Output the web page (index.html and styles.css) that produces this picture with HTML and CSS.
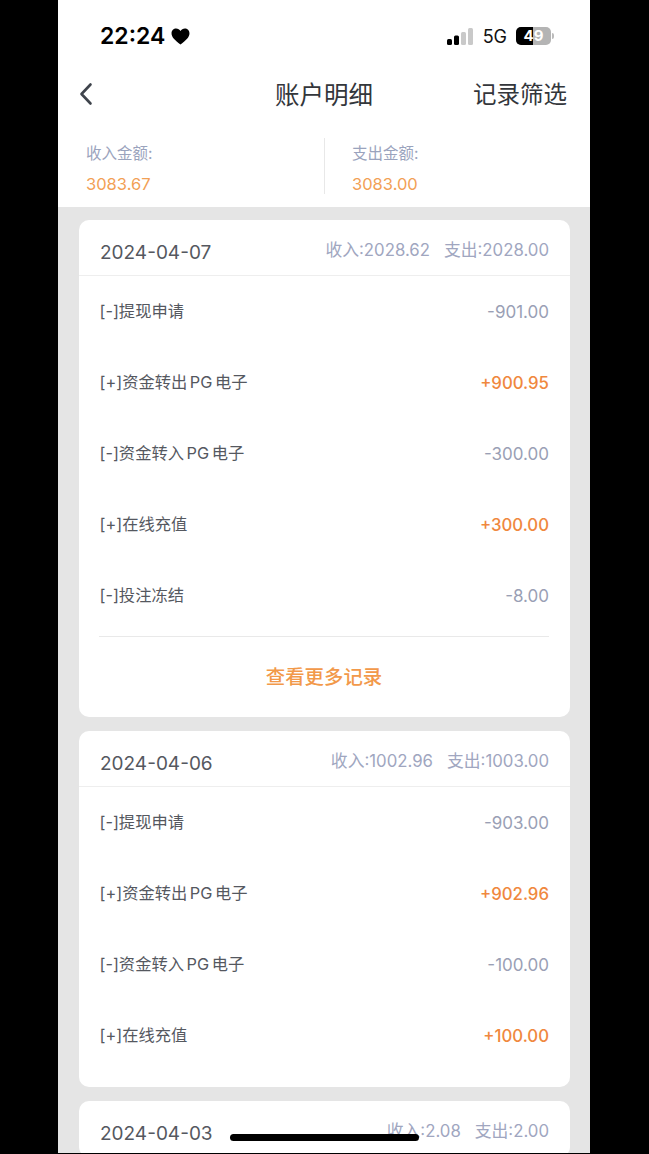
FILE: index.html
```html
<!DOCTYPE html>
<html lang="zh-CN">
<head>
<meta charset="utf-8">
<title>账户明细</title>
<link rel="stylesheet" href="styles.css">
</head>
<body>
<div class="screen">
  <header class="top">
    <div class="status">
      <div class="status-left"><span class="time">22:24</span>
        <svg class="heart" viewBox="0 0 20 18" width="19" height="17"><path d="M10 17.5C4 13 .5 9.8.5 5.6.5 2.6 2.8.5 5.4.5 7.3.5 9 1.5 10 3.3 11 1.5 12.7.5 14.6.5c2.6 0 4.9 2.100 4.900 5.100 0 4.200-3.500 7.400-9.500 11.900z" fill="#000"/></svg>
      </div>
      <div class="status-right">
        <svg class="signal" viewBox="0 0 28 17" width="28" height="17"><rect x="0" y="11" width="5" height="6" rx="1.500" fill="#000"/><rect x="7" y="7.500" width="5" height="9.500" rx="1.500" fill="#000"/><rect x="14" y="4" width="5" height="13" rx="1.500" fill="#c9c9c9"/><rect x="21" y="0" width="5" height="17" rx="1.500" fill="#c9c9c9"/></svg>
        <span class="net">5G</span>
        <div class="battery"><span class="batt-fill"></span><span class="batt-num">49</span></div>
        <span class="batt-cap"></span>
      </div>
    </div>
    <nav class="nav">
      <svg class="back" viewBox="0 0 14 24" width="14" height="24"><path d="M11.500 2.500 2.500 12l9 9.500" fill="none" stroke="#3f444c" stroke-width="2.600" stroke-linecap="round" stroke-linejoin="round"/></svg>
      <h1 class="title">账户明细</h1>
      <span class="filter">记录筛选</span>
    </nav>
    <div class="totals">
      <div class="total"><span class="total-label">收入金额:</span><span class="total-value">3083.67</span></div>
      <div class="total total-right"><span class="total-label">支出金额:</span><span class="total-value">3083.00</span></div>
    </div>
  </header>
  <main class="list">
    <section class="card">
      <div class="card-head"><span class="date">2024-04-07</span><div class="sums"><span>收入:2028.62</span><span>支出:2028.00</span></div></div>
      <div class="rows">
        <div class="row"><span class="name">[-]提现申请</span><span class="amt">-901.00</span></div>
        <div class="row"><span class="name">[+]资金转出 PG 电子</span><span class="amt plus">+900.95</span></div>
        <div class="row"><span class="name">[-]资金转入 PG 电子</span><span class="amt">-300.00</span></div>
        <div class="row"><span class="name">[+]在线充值</span><span class="amt plus">+300.00</span></div>
        <div class="row"><span class="name">[-]投注冻结</span><span class="amt">-8.00</span></div>
      </div>
      <div class="more"><span>查看更多记录</span></div>
    </section>
    <section class="card card-pad">
      <div class="card-head"><span class="date">2024-04-06</span><div class="sums"><span>收入:1002.96</span><span>支出:1003.00</span></div></div>
      <div class="rows">
        <div class="row"><span class="name">[-]提现申请</span><span class="amt">-903.00</span></div>
        <div class="row"><span class="name">[+]资金转出 PG 电子</span><span class="amt plus">+902.96</span></div>
        <div class="row"><span class="name">[-]资金转入 PG 电子</span><span class="amt">-100.00</span></div>
        <div class="row"><span class="name">[+]在线充值</span><span class="amt plus">+100.00</span></div>
      </div>
    </section>
    <section class="card">
      <div class="card-head"><span class="date">2024-04-03</span><div class="sums"><span>收入:2.08</span><span>支出:2.00</span></div></div>
    </section>
  </main>
  <div class="home"></div>
</div>
</body>
</html>
```

FILE: styles.css
```css
* { box-sizing: border-box; }
html, body { margin: 0; height: 100%; background: #000; overflow: hidden; }
body { font-family: Inter, "Noto Sans CJK SC", sans-serif; padding-left: 58px; }
.screen { position: relative; width: 532px; height: 1153px; background: #e5e5e5; overflow: hidden; }
.top { background: #fff; height: 207px; }
.status { height: 70px; display: flex; justify-content: space-between; align-items: flex-start; padding: 22px 36px 0 42px; }
.status-left { display: flex; align-items: center; gap: 6px; height: 28px; }
.time { font-size: 23px; font-weight: 600; color: #000; line-height: 28px; }
.status-right { display: flex; align-items: center; height: 28px; }
.signal { margin-right: 8px; }
.net { font-size: 18px; color: #111; margin-right: 9px; }
.battery { position: relative; width: 35px; height: 18px; border-radius: 5px; background: #b4b4b4; overflow: hidden; }
.batt-fill { display: block; width: 17px; height: 18px; background: #000; }
.batt-num { position: absolute; inset: 0; text-align: center; font-size: 15px; line-height: 18px; font-weight: 700; color: #fff; }
.batt-cap { width: 2px; height: 6px; background: #bbb; border-radius: 0 2px 2px 0; margin-left: 1px; }
.nav { height: 48px; display: flex; align-items: center; justify-content: space-between; padding: 0 23px 2px 21px; position: relative; }
.back { margin-top: 2px; }
.title { position: absolute; left: 0; right: 0; top: 1px; text-align: center; margin: 0; font-size: 24.500px; line-height: 48px; font-weight: 400; color: #33363b; }
.filter { font-size: 23.500px; color: #33363b; }
.totals { display: flex; padding-top: 20px; }
.total { width: 266px; height: 56px; padding-left: 28px; display: flex; flex-direction: column; justify-content: space-between; }
.total-right { border-left: 1px solid #e8e8e8; padding-left: 27px; }
.total-label { font-size: 15.500px; line-height: 20px; padding-top: 6px; color: #9aa3bd; height: 26px; }
.total-value { font-size: 16.500px; line-height: 20px; color: #f2a055; }
.list { padding: 13px 20px 0 21px; display: flex; flex-direction: column; gap: 14px; }
.card { background: #fff; border-radius: 10px; }
.card-pad { padding-bottom: 16px; }
.card-head { height: 56px; border-bottom: 1px solid #eee; display: flex; justify-content: space-between; align-items: center; padding: 0 21px; }
.date { font-size: 19px; color: #55585f; padding-top: 9px; }
.sums { display: flex; gap: 14px; font-size: 16.800px; color: #a0a6bf; margin-top: 2px; }
.rows { display: flex; flex-direction: column; }
.row { height: 71px; display: flex; justify-content: space-between; align-items: center; padding: 0 21px 0 20.500px; }
.name { font-size: 16.300px; color: #55585f; margin-bottom: 4px; word-spacing: -2px; }
.amt { font-size: 17px; color: #9a9fb5; }
.amt.plus { color: #f0883e; font-weight: 500; font-size: 16.800px; }
.more { margin: 5px 21px 0 20px; height: 81px; border-top: 1px solid #e9e9e9; display: flex; justify-content: center; align-items: center; padding-bottom: 3px; font-size: 19.400px; font-weight: 500; color: #f2994a; }
.home { position: absolute; left: 172px; bottom: 12px; width: 189px; height: 7px; background: #000; border-radius: 4px; }
```
